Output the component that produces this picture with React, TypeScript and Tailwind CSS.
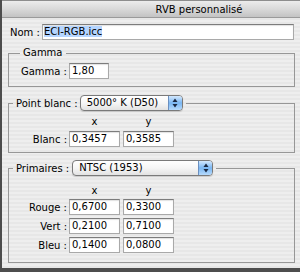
import React from "react";

function Field({ value, w = "w-[51px]" }: { value: string; w?: string }) {
  return (
    <div
      className={`${w} h-[16px] bg-white border border-[#a9a9a9] border-t-[#7c7c7c] shadow-[inset_0_1px_1px_rgba(0,0,0,0.12)] pl-[2px] leading-[14px]`}
    >
      {value}
    </div>
  );
}

function Arrows() {
  return (
    <svg width="6" height="10" viewBox="0 0 6 10">
      <path d="M3 0.5 L5.5 4 L0.5 4 Z" fill="#1b2a44" />
      <path d="M3 9.5 L5.5 6 L0.5 6 Z" fill="#1b2a44" />
    </svg>
  );
}

function Popup({ text, w }: { text: string; w: string }) {
  return (
    <div
      className={`${w} flex h-[16px] overflow-hidden rounded-[4px] border border-[#7a7a7a] bg-gradient-to-b from-white via-[#f6f6f6] to-[#e2e2e2] shadow-[0_1px_1px_rgba(0,0,0,0.15)]`}
    >
      <span className="flex-1 pl-[6px] leading-[14px] whitespace-nowrap">{text}</span>
      <span className="flex w-[14px] items-center justify-center border-l border-[#6a8fc0] bg-gradient-to-b from-[#d3e8fd] via-[#79b6f2] to-[#b6dafc]">
        <Arrows />
      </span>
    </div>
  );
}

function Row({ label, x, y }: { label: string; x: string; y: string }) {
  return (
    <div className="flex items-center">
      <span className="w-[58px] text-right mr-[2px] whitespace-nowrap">{label}</span>
      <Field value={x} />
      <div className="ml-[3px]">
        <Field value={y} />
      </div>
    </div>
  );
}

function Heads() {
  return (
    <div className="flex leading-[12px]">
      <span className="w-[60px]" />
      <span className="w-[51px] text-center">x</span>
      <span className="ml-[3px] w-[51px] text-center">y</span>
    </div>
  );
}

export default function App() {
  return (
    <div className="w-[300px] h-[272px] overflow-hidden bg-[#4d4d4d] font-['DejaVu_Sans',sans-serif] text-[10px] text-black">
      <div className="ml-[2px] h-[268px] flex flex-col bg-[repeating-linear-gradient(180deg,#eeeeee_0px,#eeeeee_2px,#e7e7e7_2px,#e7e7e7_4px)]">
        <div className="h-[18px] flex items-center justify-center pl-[96px] border-t border-[#8d8d8d] border-b border-b-[#9a9a9a] bg-gradient-to-b from-[#ececec] via-[#d9d9d9] to-[#c3c3c3] text-[10px] font-medium text-black">
          RVB personnalisé
        </div>

        <div className="mt-[6px] ml-[8px] flex items-center">
          <span className="w-[32px] whitespace-nowrap">Nom :</span>
          <div className="w-[252px] h-[16px] bg-white border border-[#a9a9a9] border-t-[#7c7c7c] shadow-[inset_0_1px_1px_rgba(0,0,0,0.12)] pl-[1px] leading-[14px]">
            <span className="bg-[#b5d5ff]">ECI-RGB.icc</span>
          </div>
        </div>

        <fieldset className="mt-[7px] ml-[6px] mr-[5px] border border-[#979797] pb-[7px]">
          <legend className="ml-[11px] px-[3px] leading-[12px]">Gamma</legend>
          <div className="mt-[4px] flex items-center">
            <span className="w-[58px] text-right mr-[2px] whitespace-nowrap">Gamma :</span>
            <Field value="1,80" w="w-[40px]" />
          </div>
        </fieldset>

        <fieldset className="mt-[8px] ml-[6px] mr-[5px] border border-[#979797] pb-[5px]">
          <legend className="ml-[4px] px-[3px]">
            <div className="flex items-center">
              <span className="mr-[2px] whitespace-nowrap">Point blanc :</span>
              <Popup text="5000° K (D50)" w="w-[103px]" />
            </div>
          </legend>
          <div className="mt-[5px]">
            <Heads />
          </div>
          <div className="mt-[3px]">
            <Row label="Blanc :" x="0,3457" y="0,3585" />
          </div>
        </fieldset>

        <fieldset className="mt-[7px] ml-[6px] mr-[5px] border border-[#979797] pb-[9px]">
          <legend className="ml-[4px] px-[3px]">
            <div className="flex items-center">
              <span className="mr-[3px] whitespace-nowrap">Primaires :</span>
              <Popup text="NTSC (1953)" w="w-[141px]" />
            </div>
          </legend>
          <div className="mt-[9px]">
            <Heads />
          </div>
          <div className="mt-[2px] flex flex-col gap-[3px]">
            <Row label="Rouge :" x="0,6700" y="0,3300" />
            <Row label="Vert :" x="0,2100" y="0,7100" />
            <Row label="Bleu :" x="0,1400" y="0,0800" />
          </div>
        </fieldset>
      </div>
    </div>
  );
}
